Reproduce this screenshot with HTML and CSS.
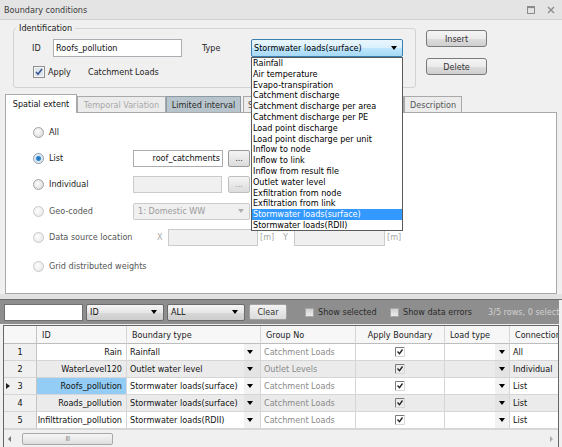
FILE: index.html
```html
<!DOCTYPE html>
<html lang="en">

<head>
    <meta charset="UTF-8">
    <meta name="viewport" content="width=device-width, initial-scale=1.0">
    <title>Boundary conditions</title>
    <link rel="stylesheet" href="styles.css">
</head>

<body>
<div class="window">

	<div class="titlebar">
		<span class="title">Boundary conditions</span>
		<span class="win-btns">
			<svg width="8" height="8" viewBox="0 0 8 8"><rect x="0.5" y="0.5" width="7" height="7" fill="none" stroke="#8c8c8c"/><rect x="0.5" y="0.5" width="7" height="1.6" fill="#8c8c8c"/></svg>
			<svg width="8" height="8" viewBox="0 0 8 8"><path d="M1 1L7 7M7 1L1 7" stroke="#8c8c8c" stroke-width="1.4"/></svg>
		</span>
	</div>

	<div class="top">
		<fieldset class="ident">
			<legend>Identification</legend>
			<div class="ident-row">
				<span class="lbl-id">ID</span>
				<span class="input id-input">Roofs_pollution</span>
				<span class="lbl-type">Type</span>
				<div class="type-select">
					<span>Stormwater loads(surface)</span>
					<i class="arrow"></i>
					<ul class="dropdown">
						<li>Rainfall</li>
						<li>Air temperature</li>
						<li>Evapo-transpiration</li>
						<li>Catchment discharge</li>
						<li>Catchment discharge per area</li>
						<li>Catchment discharge per PE</li>
						<li>Load point discharge</li>
						<li>Load point discharge per unit</li>
						<li>Inflow to node</li>
						<li>Inflow to link</li>
						<li>Inflow from result file</li>
						<li>Outlet water level</li>
						<li>Exfiltration from node</li>
						<li>Exfiltration from link</li>
						<li class="selected">Stormwater loads(surface)</li>
						<li>Stormwater loads(RDII)</li>
					</ul>
				</div>
			</div>
			<div class="apply-row">
				<svg class="apply-check" width="12" height="12" viewBox="0 0 12 12"><rect x="0.5" y="0.5" width="11" height="11" fill="#f6f6f6" stroke="#8f8f8f"/><rect x="2" y="2" width="8" height="8" fill="#dde4ec"/><path d="M3 6l2 2.2L9 3" fill="none" stroke="#3b5898" stroke-width="1.6"/></svg>
				<span class="apply-label">Apply</span>
				<span>Catchment Loads</span>
			</div>
		</fieldset>
		<div class="side-btns">
			<span class="btn">Insert</span>
			<span class="btn">Delete</span>
		</div>
	</div>

	<div class="tabs">
		<span class="tab active">Spatial extent</span>
		<span class="tab disabled">Temporal Variation</span>
		<span class="tab dark">Limited interval</span>
		<span class="tab hidden-tab">Settings</span>
		<span class="tab desc">Description</span>
	</div>

	<div class="panel">
		<div class="opt">
			<i class="radio"></i><span class="opt-label">All</span>
		</div>
		<div class="opt">
			<i class="radio on"></i><span class="opt-label">List</span>
			<span class="input list-input">roof_catchments</span>
			<span class="dots">...</span>
		</div>
		<div class="opt">
			<i class="radio"></i><span class="opt-label">Individual</span>
			<span class="input off ind-input"></span>
			<span class="dots ind-dots">...</span>
		</div>
		<div class="opt geo">
			<i class="radio off"></i><span class="opt-label muted">Geo-coded</span>
			<span class="input off geo-select">1: Domestic WW<i class="arrow light"></i></span>
		</div>
		<div class="opt">
			<i class="radio off"></i><span class="opt-label muted">Data source location</span>
			<span class="xy-lbl x-lbl">X</span>
			<span class="input off xy-input"></span>
			<span class="unit">[m]</span>
			<span class="xy-lbl">Y</span>
			<span class="input off xy-input y-input"></span>
			<span class="unit">[m]</span>
		</div>
		<div class="opt last">
			<i class="radio off"></i><span class="opt-label muted wide">Grid distributed weights</span>
		</div>
	</div>

	<div class="splitter"></div>

	<div class="toolbar">
		<span class="search"></span>
		<span class="tsel">ID<i class="arrow"></i></span>
		<span class="tsel">ALL<i class="arrow"></i></span>
		<span class="clear">Clear</span>
		<span class="tchk"><i class="box"></i>Show selected</span>
		<span class="tchk errors"><i class="box"></i>Show data errors</span>
		<span class="status">3/5 rows, 0 selected</span>
	</div>

	<div class="grid">
		<div class="grid-table">
			<div class="row head">
				<div class="rh"></div>
				<div>ID</div>
				<div>Boundary type</div>
				<div>Group No</div>
				<div class="center">Apply Boundary</div>
				<div>Load type</div>
				<div>Connection</div>
			</div>
			<div class="row">
				<div class="rh">1</div>
				<div class="id">Rain</div>
				<div class="combo"><span>Rainfall</span><b class="dd"><i class="arrow"></i></b></div>
				<div class="grp">Catchment Loads</div>
				<div class="center"><svg width="10" height="10" viewBox="0 0 10 10"><path d="M0.5 9.5V0.5H9.5" fill="none" stroke="#7a7a7a"/><path d="M0.5 9.5H9.5V0.5" fill="none" stroke="#d6d6d6"/><path d="M2.5 4.5l2 2.2 3-4.2" fill="none" stroke="#222" stroke-width="1.3"/></svg></div>
				<div class="combo"><span></span><b class="dd small"><i class="arrow"></i></b></div>
				<div>All</div>
			</div>
			<div class="row alt">
				<div class="rh">2</div>
				<div class="id">WaterLevel120</div>
				<div class="combo"><span>Outlet water level</span><b class="dd"><i class="arrow"></i></b></div>
				<div class="grp">Outlet Levels</div>
				<div class="center"><svg width="10" height="10" viewBox="0 0 10 10"><path d="M0.5 9.5V0.5H9.5" fill="none" stroke="#7a7a7a"/><path d="M0.5 9.5H9.5V0.5" fill="none" stroke="#d6d6d6"/><path d="M2.5 4.5l2 2.2 3-4.2" fill="none" stroke="#222" stroke-width="1.3"/></svg></div>
				<div class="combo"><span></span><b class="dd small"><i class="arrow"></i></b></div>
				<div>Individual</div>
			</div>
			<div class="row">
				<div class="rh current">3</div>
				<div class="id picked">Roofs_pollution</div>
				<div class="combo"><span>Stormwater loads(surface)</span><b class="dd"><i class="arrow"></i></b></div>
				<div class="grp">Catchment Loads</div>
				<div class="center"><svg width="10" height="10" viewBox="0 0 10 10"><path d="M0.5 9.5V0.5H9.5" fill="none" stroke="#7a7a7a"/><path d="M0.5 9.5H9.5V0.5" fill="none" stroke="#d6d6d6"/><path d="M2.5 4.5l2 2.2 3-4.2" fill="none" stroke="#222" stroke-width="1.3"/></svg></div>
				<div class="combo"><span></span><b class="dd small"><i class="arrow"></i></b></div>
				<div>List</div>
			</div>
			<div class="row alt">
				<div class="rh">4</div>
				<div class="id">Roads_pollution</div>
				<div class="combo"><span>Stormwater loads(surface)</span><b class="dd"><i class="arrow"></i></b></div>
				<div class="grp">Catchment Loads</div>
				<div class="center"><svg width="10" height="10" viewBox="0 0 10 10"><path d="M0.5 9.5V0.5H9.5" fill="none" stroke="#7a7a7a"/><path d="M0.5 9.5H9.5V0.5" fill="none" stroke="#d6d6d6"/><path d="M2.5 4.5l2 2.2 3-4.2" fill="none" stroke="#222" stroke-width="1.3"/></svg></div>
				<div class="combo"><span></span><b class="dd small"><i class="arrow"></i></b></div>
				<div>List</div>
			</div>
			<div class="row">
				<div class="rh">5</div>
				<div class="id">Infilttration_pollution</div>
				<div class="combo"><span>Stormwater loads(RDII)</span><b class="dd"><i class="arrow"></i></b></div>
				<div class="grp">Catchment Loads</div>
				<div class="center"><svg width="10" height="10" viewBox="0 0 10 10"><path d="M0.5 9.5V0.5H9.5" fill="none" stroke="#7a7a7a"/><path d="M0.5 9.5H9.5V0.5" fill="none" stroke="#d6d6d6"/><path d="M2.5 4.5l2 2.2 3-4.2" fill="none" stroke="#222" stroke-width="1.3"/></svg></div>
				<div class="combo"><span></span><b class="dd small"><i class="arrow"></i></b></div>
				<div>List</div>
			</div>
		</div>
		<div class="hscroll">
			<i class="sarrow left"></i>
			<span class="thumb">III</span>
			<i class="sarrow right"></i>
		</div>
	</div>

</div>
</body>
</html>
```

FILE: styles.css
```css
        body {
            margin: 0;
            padding: 0;
            font-family: Tahoma, "DejaVu Sans Condensed", "Liberation Sans", sans-serif;
            font-size: 9px;
            color: #1e1e1e;
            background-color: #f0f0f0;
        }

		.window {
			width: 562px;
			height: 447px;
			overflow: hidden;
			background-color: #f0f0f0;
		}

		/* title bar */

		.titlebar {
			height: 20px;
			box-sizing: border-box;
			display: flex;
			align-items: center;
			padding: 0 7px 0 4px;
			background-color: #e4e4e4;
			border-bottom: 1px solid #d0d0d0;
			color: #3a3a3a;
		}

		.title {
			flex: 1;
		}

		.win-btns {
			display: flex;
			gap: 12px;
		}

		/* identification */

		.top {
			display: flex;
			height: 74px;
			box-sizing: border-box;
			padding: 3px 0 0 13px;
		}

		.ident {
			margin: 0;
			padding: 0;
			width: 403px;
			height: 65px;
			box-sizing: border-box;
			border: 1px solid #d3d3d3;
			border-radius: 3px;
		}

		.ident legend {
			margin-left: 2px;
			padding: 0 3px;
			line-height: 11px;
			color: #222;
		}

		.ident-row {
			display: flex;
			align-items: center;
			height: 18px;
			margin: 5px 0 0 18px;
		}

		.lbl-id {
			width: 21px;
		}

		.lbl-type {
			width: 49px;
			margin-left: 20px;
		}

		.input {
			display: flex;
			align-items: center;
			flex-shrink: 0;
			box-sizing: border-box;
			height: 17px;
			background-color: #fff;
			border: 1px solid #abadb3;
			color: #111;
		}

		.id-input {
			width: 129px;
			height: 18px;
			padding-left: 2px;
		}

		.type-select {
			position: relative;
			display: flex;
			align-items: center;
			justify-content: space-between;
			box-sizing: border-box;
			width: 152px;
			height: 18px;
			padding: 0 5px 0 2px;
			border: 1px solid #3c7fb1;
			border-radius: 2px;
			background: linear-gradient(#eaf6fd, #d9f0fc 50%, #bee6fd 51%, #a7d9f5);
			color: #000;
		}

		.dropdown {
			position: absolute;
			top: 17px;
			left: -1px;
			z-index: 10;
			width: 152px;
			height: 174px;
			box-sizing: border-box;
			margin: 0;
			padding: 0;
			list-style: none;
			background-color: #fff;
			border: 1px solid #5a5a5a;
			color: #000;
		}

		.dropdown li {
			height: 10.8px;
			line-height: 10.8px;
			padding-left: 1px;
			white-space: nowrap;
		}

		.dropdown li.selected {
			background-color: #3399ff;
			color: #fff;
		}

		.apply-row {
			display: flex;
			align-items: center;
			height: 14px;
			margin: 8px 0 0 19px;
		}

		.apply-check {
			margin-right: 3px;
		}

		.apply-label {
			width: 40px;
		}

		.side-btns {
			display: flex;
			flex-direction: column;
			gap: 11px;
			margin: 7px 0 0 10px;
		}

		.btn {
			display: flex;
			align-items: center;
			justify-content: center;
			width: 61px;
			height: 17px;
			box-sizing: border-box;
			border: 1px solid #7a7a7a;
			border-radius: 3px;
			background: linear-gradient(#f4f4f4, #ebebeb 50%, #dddddd 51%, #cfcfcf);
			color: #333;
		}

		.arrow {
			display: block;
			width: 0;
			height: 0;
			border-left: 3px solid transparent;
			border-right: 3px solid transparent;
			border-top: 4px solid #000;
		}

		.arrow.light {
			border-top-color: #b0b0b0;
		}

		/* tabs */

		.tabs {
			display: flex;
			align-items: flex-end;
			height: 18px;
			padding-left: 5px;
		}

		.tab {
			display: flex;
			align-items: center;
			justify-content: center;
			height: 16px;
			box-sizing: border-box;
			border: 1px solid #a9a9a9;
			border-bottom: none;
			background-color: #ececec;
			color: #444;
			white-space: nowrap;
		}

		.tab.active {
			width: 72px;
			height: 19px;
			margin-bottom: -1px;
			background-color: #fff;
			color: #111;
			position: relative;
			z-index: 2;
		}

		.tab.disabled {
			width: 89px;
			color: #a8a8a8;
		}

		.tab.dark {
			width: 75px;
			background-color: #b7c4cb;
			border-color: #8b9aa3;
			color: #2a2a2a;
		}

		.tab.hidden-tab {
			width: 161px;
			margin-left: 2px;
			justify-content: flex-start;
			padding-left: 4px;
		}

		.tab.desc {
			width: 58px;
			color: #555;
		}

		/* spatial extent page */

		.panel {
			position: relative;
			z-index: 1;
			margin-left: 5px;
			width: 552px;
			height: 182px;
			box-sizing: border-box;
			padding-top: 6px;
			border: 1px solid #a9a9a9;
			background-color: #fff;
		}

		.opt {
			display: flex;
			align-items: center;
			height: 26px;
			padding-left: 27px;
		}

		.opt.geo {
			margin-top: 1px;
		}

		.opt.last {
			margin-top: 3px;
		}

		.radio {
			display: block;
			width: 11px;
			height: 11px;
			box-sizing: border-box;
			border-radius: 50%;
			border: 1px solid #a3a3a3;
			background: radial-gradient(circle at 40% 40%, #fdfdfd, #d4d4d4);
		}

		.radio.on {
			border-color: #8a9bb0;
			background: radial-gradient(circle, #1d6fb8 0, #2f86cc 2px, #d6e6f3 3px, #f2f2f2 5px);
		}

		.radio.off {
			border-color: #c9c9c9;
			background: radial-gradient(circle at 40% 40%, #fdfdfd, #e4e4e4);
		}

		.opt-label {
			width: 84px;
			margin-left: 5px;
			color: #222;
			white-space: nowrap;
		}

		.opt-label.muted {
			color: #555;
		}

		.opt-label.wide {
			width: auto;
		}

		.list-input {
			width: 90px;
			justify-content: flex-end;
			padding-right: 2px;
		}

		.input.off {
			background-color: #f0f0f0;
			border-color: #cbcbcb;
			color: #9a9a9a;
		}

		.ind-input {
			width: 89px;
		}

		.dots {
			display: flex;
			align-items: flex-end;
			justify-content: center;
			width: 22px;
			height: 17px;
			box-sizing: border-box;
			margin-left: 5px;
			padding-bottom: 3px;
			border: 1px solid #9a9a9a;
			border-radius: 2px;
			background: linear-gradient(#f4f4f4, #dcdcdc);
			color: #333;
		}

		.ind-dots {
			margin-left: 6px;
			color: #999;
			border-color: #c0c0c0;
		}

		.geo-select {
			width: 117px;
			justify-content: space-between;
			padding: 0 5px 0 4px;
			border-radius: 2px;
		}

		.xy-lbl {
			width: 11px;
			color: #a8a8a8;
		}

		.x-lbl {
			margin-left: 24px;
		}

		.xy-input {
			width: 90px;
		}

		.y-input {
			width: 91px;
		}

		.unit {
			width: 25px;
			padding-left: 2px;
			box-sizing: border-box;
			color: #a8a8a8;
		}

		.splitter {
			height: 5px;
			background-color: #e2e2e2;
			border-bottom: 1px solid #6e6e6e;
		}

		/* filter toolbar */

		.toolbar {
			display: flex;
			align-items: center;
			width: 559px;
			height: 24px;
			box-sizing: border-box;
			padding-left: 4px;
			background-color: #8e8e8e;
			white-space: nowrap;
			overflow: hidden;
		}

		.toolbar > span {
			flex-shrink: 0;
		}

		.search {
			width: 79px;
			height: 17px;
			box-sizing: border-box;
			background-color: #fff;
			border: 1px solid #6f6f6f;
		}

		.tsel {
			display: flex;
			align-items: center;
			justify-content: space-between;
			width: 78px;
			height: 17px;
			box-sizing: border-box;
			margin-left: 3px;
			padding: 0 6px 0 3px;
			border: 1px solid #6a6a6a;
			border-radius: 2px;
			background: linear-gradient(#f5f5f5, #e6e6e6 50%, #d8d8d8 51%, #cdcdcd);
			color: #111;
		}

		.clear {
			display: flex;
			align-items: center;
			justify-content: center;
			width: 38px;
			height: 16px;
			box-sizing: border-box;
			margin-left: 4px;
			border: 1px solid #a0a0a0;
			border-radius: 2px;
			background: linear-gradient(#f2f2f2, #dcdcdc);
			color: #333;
		}

		.tchk {
			display: flex;
			align-items: center;
			width: 85px;
			margin-left: 18px;
			color: #2a2a2a;
		}

		.tchk.errors {
			width: 98px;
			margin-left: 0;
		}

		.tchk .box {
			display: block;
			width: 9px;
			height: 9px;
			box-sizing: border-box;
			margin-right: 4px;
			border: 1px solid #a8a8a8;
			background: linear-gradient(#d0d0d0, #ececec);
		}

		.status {
			color: #d2d2d2;
		}

		/* data grid */

		.grid {
			margin: 1px 0 0 3px;
			width: 556px;
			box-sizing: border-box;
			border: 1px solid #666;
			background-color: #fff;
			overflow: hidden;
		}

		.grid-table {
			display: grid;
			grid-template-columns: 33px 90px 134px 95px 89px 65px 80px;
			grid-template-rows: 18px repeat(5, 17px);
		}

		.row {
			display: contents;
		}

		.row > div {
			display: flex;
			align-items: center;
			box-sizing: border-box;
			padding-left: 3px;
			border-right: 1px solid #d6d6d6;
			border-bottom: 1px solid #d6d6d6;
			white-space: nowrap;
			overflow: hidden;
			color: #111;
		}

		.row.head > div {
			padding-left: 5px;
			background-color: #f7f7f7;
			border-bottom-color: #bdbdbd;
			color: #222;
		}

		.row.alt > div {
			background-color: #ebebeb;
		}

		.row > .rh {
			justify-content: center;
			padding-left: 0;
			background-color: #f0f0f0;
			border-right-color: #c4c4c4;
			position: relative;
		}

		.row.alt > .rh {
			background-color: #f0f0f0;
		}

		.rh.current::before {
			content: "";
			position: absolute;
			left: 2px;
			top: 5px;
			border-top: 3.5px solid transparent;
			border-bottom: 3.5px solid transparent;
			border-left: 4px solid #222;
		}

		.row > .id {
			justify-content: flex-end;
			padding-right: 4px;
		}

		.row > .id.picked {
			background-color: #93cdf5;
		}

		.row > .grp {
			color: #8a8a8a;
		}

		.row > .center,
		.row.head > .center {
			justify-content: center;
			padding-left: 0;
		}

		.row > .combo {
			padding-right: 0;
		}

		.combo span {
			flex: 1;
		}

		.dd {
			display: flex;
			align-items: center;
			align-self: stretch;
			width: 16px;
			padding-left: 3px;
			box-sizing: border-box;
			background-color: #f2f2f2;
		}

		.dd.small {
			width: 14px;
			padding-left: 4px;
		}

		.row.alt .dd {
			background-color: #e4e4e4;
		}

		.hscroll {
			display: flex;
			align-items: center;
			height: 17px;
			background-color: #f0f0f0;
			border-top: 1px solid #d8d8d8;
		}

		.sarrow {
			display: block;
			width: 0;
			height: 0;
			border-top: 3px solid transparent;
			border-bottom: 3px solid transparent;
		}

		.sarrow.left {
			margin-left: 4px;
			border-right: 3px solid #777;
		}

		.sarrow.right {
			margin-left: auto;
			margin-right: 5px;
			border-left: 3px solid #aaa;
		}

		.thumb {
			display: flex;
			align-items: center;
			justify-content: center;
			width: 91px;
			height: 12px;
			box-sizing: border-box;
			margin-left: 11px;
			border: 1px solid #a8a8a8;
			border-radius: 2px;
			background: linear-gradient(#f6f6f6, #dedede);
			color: #888;
			font-size: 7px;
			letter-spacing: -0.5px;
		}
```
